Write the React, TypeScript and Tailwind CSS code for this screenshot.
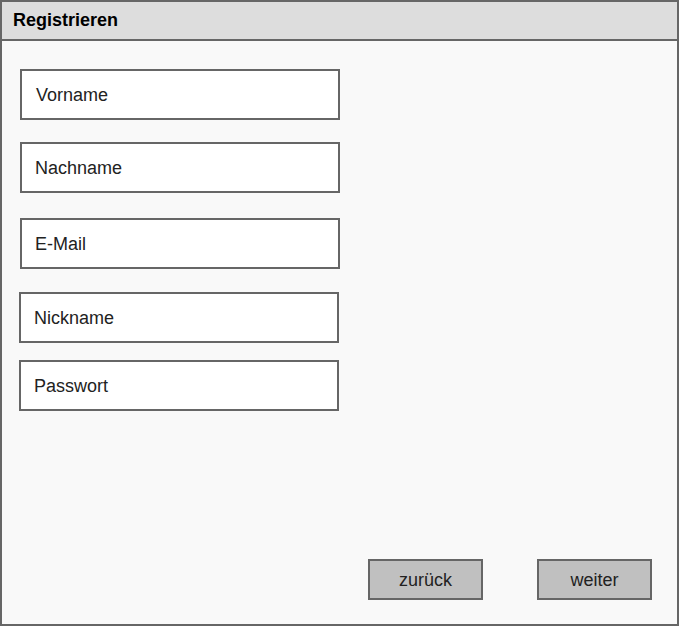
export default function App() {
  const fields = [
    { label: "Vorname", cls: "mt-[28px] ml-[18px] pl-[14px]" },
    { label: "Nachname", cls: "mt-[22px] ml-[18px] pl-[13px]" },
    { label: "E-Mail", cls: "mt-[25px] ml-[18px] pl-[13px]" },
    { label: "Nickname", cls: "mt-[23px] ml-[17px] pl-[13px]" },
    { label: "Passwort", cls: "mt-[17px] ml-[17px] pl-[13px]" },
  ];

  return (
    <div
      className="w-[680px] h-[628px] bg-white"
      style={{ fontFamily: '"Liberation Sans", Arial, sans-serif' }}
    >
      <div className="w-[679px] h-[626px] border-2 border-[#666666] bg-[#f9f9f9] flex flex-col text-[#1a1a1a]">
        {/* Header */}
        <div className="h-[39px] shrink-0 bg-[#dddddd] border-b-2 border-[#666666] flex items-center pl-[11px]">
          <span className="text-[18px] font-bold pb-[1px] text-black">Registrieren</span>
        </div>

        {/* Fields */}
        <div className="flex flex-col">
          {fields.map((f) => (
            <div
              key={f.label}
              className={`w-[320px] h-[51px] bg-white border-2 border-[#666666] flex items-center pt-[2px] text-[18px] text-[#222222] ${f.cls}`}
            >
              {f.label}
            </div>
          ))}
        </div>

        {/* Buttons */}
        <div className="mt-auto flex justify-end gap-[54px] pr-[25px] pb-[24px]">
          <button className="w-[115px] h-[41px] bg-[#c0c0c0] border-2 border-[#666666] pt-[2px] text-[18px] text-[#222222]">
            zurück
          </button>
          <button className="w-[115px] h-[41px] bg-[#c0c0c0] border-2 border-[#666666] pt-[2px] text-[18px] text-[#222222]">
            weiter
          </button>
        </div>
      </div>
    </div>
  );
}
